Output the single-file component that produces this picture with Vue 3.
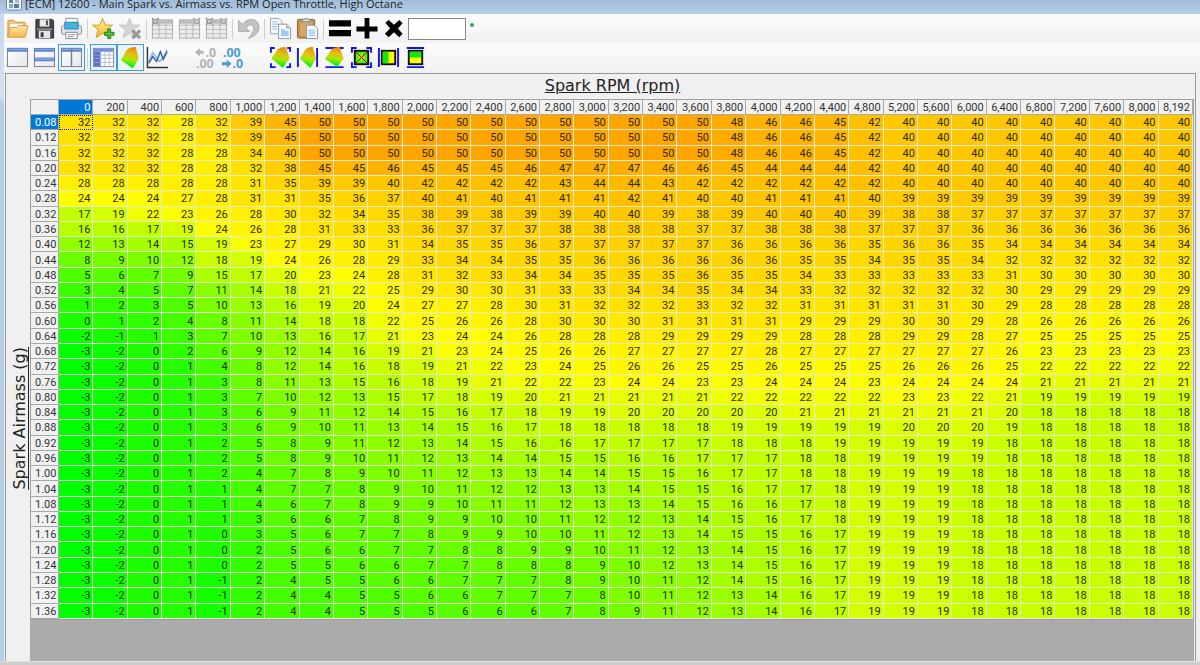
<script setup>
const rpm = [
  ...Array.from({ length: 23 }, (_, i) => i * 200),
  ...Array.from({ length: 9 }, (_, i) => 4800 + i * 400),
  8192
].map((v) => v.toLocaleString('en-US'))

const source = `
32 32 32 28 32 39 45 50 50 50 50 50 50 50 50 50 50 50 50 48 46 46 45 42 40 40 40 40 40 40 40 40 40
32 32 32 28 32 39 45 50 50 50 50 50 50 50 50 50 50 50 50 48 46 46 45 42 40 40 40 40 40 40 40 40 40
32 32 32 28 28 34 40 50 50 50 50 50 50 50 50 50 50 50 50 48 46 46 45 42 40 40 40 40 40 40 40 40 40
32 32 32 28 28 32 38 45 45 46 45 45 45 46 47 47 47 46 46 45 44 44 44 42 40 40 40 40 40 40 40 40 40
28 28 28 28 28 31 35 39 39 40 42 42 42 42 43 44 44 43 42 42 42 42 42 42 40 40 40 40 40 40 40 40 40
24 24 24 27 28 31 31 35 36 37 40 41 40 41 41 41 42 41 40 40 41 41 41 40 39 39 39 39 39 39 39 39 39
17 19 22 23 26 28 30 32 34 35 38 39 38 39 39 40 40 39 38 39 40 40 40 39 38 38 37 37 37 37 37 37 37
16 16 17 19 24 26 28 31 33 33 36 37 37 37 38 38 38 38 37 37 38 38 38 37 37 37 36 36 36 36 36 36 36
12 13 14 15 19 23 27 29 30 31 34 35 35 36 37 37 37 37 37 36 36 36 36 35 36 36 35 34 34 34 34 34 34
8 9 10 12 18 19 24 26 28 29 33 34 34 35 35 36 36 36 36 36 36 35 35 34 35 35 34 32 32 32 32 32 32
5 6 7 9 15 17 20 23 24 28 31 32 33 34 34 35 35 35 36 35 35 34 33 33 33 33 33 31 30 30 30 30 30
3 4 5 7 11 14 18 21 22 25 29 30 30 31 33 33 34 34 35 34 34 33 32 32 32 32 32 30 29 29 29 29 29
1 2 3 5 10 13 16 19 20 24 27 27 28 30 31 32 32 32 33 32 32 31 31 31 31 31 30 29 28 28 28 28 28
0 1 2 4 8 11 14 18 18 22 25 26 26 28 30 30 30 31 31 31 31 29 29 29 30 30 29 28 26 26 26 26 26
-2 -1 1 3 7 10 13 16 17 21 23 24 24 26 28 28 28 29 29 29 29 28 28 28 29 29 28 27 25 25 25 25 25
-3 -2 0 2 6 9 12 14 16 19 21 23 24 25 26 26 27 27 27 27 28 27 27 27 27 27 27 26 23 23 23 23 23
-3 -2 0 1 4 8 12 14 16 18 19 21 22 23 24 25 26 26 25 25 26 25 25 25 26 26 26 25 22 22 22 22 22
-3 -2 0 1 3 8 11 13 15 16 18 19 21 22 22 23 24 24 23 23 24 24 24 23 24 24 24 24 21 21 21 21 21
-3 -2 0 1 3 7 10 12 13 15 17 18 19 20 21 21 21 21 21 22 22 22 22 22 23 23 22 21 19 19 19 19 19
-3 -2 0 1 3 6 9 11 12 14 15 16 17 18 19 19 20 20 20 20 20 21 21 21 21 21 21 20 18 18 18 18 18
-3 -2 0 1 3 6 9 10 11 13 14 15 16 17 18 18 18 18 18 19 19 19 19 19 20 20 20 19 18 18 18 18 18
-3 -2 0 1 2 5 8 9 11 12 13 14 15 16 16 17 17 17 17 18 18 18 19 19 19 19 19 18 18 18 18 18 18
-3 -2 0 1 2 5 8 9 10 11 12 13 14 14 15 15 16 16 17 17 17 18 18 19 19 19 19 18 18 18 18 18 18
-3 -2 0 1 2 4 7 8 9 10 11 12 13 13 14 14 15 15 16 17 17 18 18 19 19 19 18 18 18 18 18 18 18
-3 -2 0 1 1 4 7 7 8 9 10 11 12 12 13 13 14 15 15 16 17 17 18 19 19 19 18 18 18 18 18 18 18
-3 -2 0 1 1 4 6 7 8 9 9 10 11 11 12 13 13 14 15 16 16 17 18 19 19 19 18 18 18 18 18 18 18
-3 -2 0 1 1 3 6 6 7 8 9 9 10 10 11 12 12 13 14 15 16 17 18 19 19 19 18 18 18 18 18 18 18
-3 -2 0 1 0 3 5 6 7 7 8 9 9 10 10 11 12 13 14 15 15 16 17 19 19 19 18 18 18 18 18 18 18
-3 -2 0 1 0 2 5 6 6 7 7 8 8 9 9 10 11 12 13 14 15 16 17 19 19 19 18 18 18 18 18 18 18
-3 -2 0 1 0 2 5 5 6 6 7 7 8 8 8 9 10 12 13 14 15 16 17 19 19 19 18 18 18 18 18 18 18
-3 -2 0 1 -1 2 4 5 5 6 6 7 7 7 8 9 10 11 12 14 15 16 17 19 19 19 18 18 18 18 18 18 18
-3 -2 0 1 -1 2 4 4 5 5 6 6 7 7 7 8 10 11 12 13 14 16 17 19 19 19 18 18 18 18 18 18 18
-3 -2 0 1 -1 2 4 4 5 5 5 6 6 6 7 8 9 11 12 13 14 16 17 19 19 19 18 18 18 18 18 18 18
`
const rows = source.trim().split('\n').map((line, i) => ({
  airmass: (0.08 + i * 0.04).toFixed(2),
  values: line.split(' ').map(Number)
}))

// Green at the lowest value, yellow half way, orange at the highest.
const LOW = -3
const HIGH = 50
const MID = (LOW + HIGH) / 2
function shade(v) {
  if (v <= MID) return `rgb(${Math.round(((v - LOW) / (MID - LOW)) * 255)}, 255, 0)`
  return `rgb(255, ${Math.round(255 - ((v - MID) / (HIGH - MID)) * 90)}, 0)`
}
</script>

<template>
  <div class="window">
    <svg width="0" height="0" class="defs" aria-hidden="true">
      <defs>
        <linearGradient id="surf" x1="0.6" y1="0" x2="0.4" y2="1">
          <stop offset="0" stop-color="#e88a10" /><stop offset="0.35" stop-color="#e0c40c" />
          <stop offset="0.6" stop-color="#a6e80a" /><stop offset="0.85" stop-color="#0cf010" />
        </linearGradient>
        <linearGradient id="gold" x1="0" y1="0" x2="0" y2="1">
          <stop offset="0" stop-color="#fff3a8" /><stop offset="1" stop-color="#f3b41c" />
        </linearGradient>
        <linearGradient id="folder" x1="0" y1="0" x2="0" y2="1">
          <stop offset="0" stop-color="#ffe9b0" /><stop offset="1" stop-color="#f8b84a" />
        </linearGradient>
        <linearGradient id="pane" x1="0" y1="0" x2="1" y2="1">
          <stop offset="0" stop-color="#ffffff" /><stop offset="1" stop-color="#e4e6ea" />
        </linearGradient>
      </defs>
    </svg>

    <header class="titlebar">
      <svg class="app-icon" viewBox="0 0 16 14">
        <rect x="0.5" y="-2" width="15" height="12" rx="1" fill="#f4f6f8" stroke="#7b8794" />
        <rect x="3" y="0" width="4" height="3" fill="#5b86b0" /><rect x="9" y="0" width="4" height="3" fill="#a9bccb" />
        <rect x="3" y="4" width="4" height="4" fill="#8fa9be" /><rect x="8" y="4" width="5" height="4" fill="#4d7da9" />
      </svg>
      <span class="title">[ECM] 12600 - Main Spark vs. Airmass vs. RPM Open Throttle, High Octane</span>
    </header>

    <div class="content">
      <div class="toolbar" role="toolbar" aria-label="File and edit">
        <button class="tool" aria-label="Open">
          <svg viewBox="0 0 24 24"><path d="M2 20V4.500q0-1 1-1h5l2 2h9q1 0 1 1V14z" fill="#f2c878" stroke="#c9923a" /><path d="M4 7h14v6H4z" fill="#fff" stroke="#cdb98f" stroke-width=".6" /><path d="M1.500 21 4.500 11H11l2-2h10l-3 12z" fill="url(#folder)" stroke="#d69a3c" stroke-linejoin="round" /></svg>
        </button>
        <button class="tool" aria-label="Save">
          <svg viewBox="0 0 24 24"><path d="M3 2.500h17l1.500 1.500v18H3z" fill="#474549" stroke="#302e32" /><path d="M7 2.500h10V10H7z" fill="#e9ebee" /><rect x="13.500" y="3.500" width="2" height="5" fill="#474549" /><path d="M4 12h16v2H4z" fill="#8e8d92" /><path d="M6 14.500h12V22H6z" fill="#e4e5e8" /><rect x="8" y="16" width="3" height="5" fill="#3b393d" /></svg>
        </button>
        <button class="tool" aria-label="Print">
          <svg viewBox="0 0 24 24"><path d="M6 1.500h12V9H6z" fill="#fff" stroke="#8b929a" /><path d="M4 9 6.500 6h11L20 9z" fill="#7d858e" /><rect x="1.500" y="9" width="21" height="9" rx="2" fill="#dfe3e8" stroke="#8a929b" /><path d="M5 5.500h14v7H5z" fill="#45b3dc" stroke="#2d86b5" /><path d="M6 16h12v6.500H6z" fill="#fff" stroke="#808992" /><path d="M8 18.500h8M8 20.500h6" stroke="#88939e" /></svg>
        </button>
        <span class="sep"></span>
        <button class="tool" aria-label="Add favorite">
          <svg viewBox="0 0 24 24"><path d="m11 1.500 2.800 7h7.700l-6 4.800 2.300 8.200L11 17l-6.800 4.500 2.300-8.200-6-4.800h7.700z" fill="url(#gold)" stroke="#d4971b" stroke-linejoin="round" /><path d="M16.500 12.500h3v3.500H23v3h-3.500v3.500h-3V19H13v-3h3.500z" fill="#4fc03a" stroke="#1f7d17" /></svg>
        </button>
        <button class="tool" aria-label="Remove favorite" disabled>
          <svg viewBox="0 0 24 24"><path d="m11 1.500 2.800 7h7.700l-6 4.800 2.300 8.200L11 17l-6.800 4.500 2.300-8.200-6-4.800h7.700z" fill="#d6d6d6" stroke="#c2c2c2" stroke-linejoin="round" /><path d="m14 14 8 8m0-8-8 8" stroke="#9b9b9b" stroke-width="3.500" /></svg>
        </button>
        <span class="sep"></span>
        <button v-for="n in 3" :key="n" class="tool" :aria-label="'Table tool ' + n" disabled>
          <svg viewBox="0 0 24 24">
            <rect x="1.500" y="3" width="21" height="19" fill="#ededed" stroke="#aaa" /><path d="M2 3h20v4H2z" fill="#bcbcbc" /><path d="M2 8.500h20M2 13h20M2 17.500h20M8.500 4v18M15.500 4v18" stroke="#bbb" />
            <path v-if="n !== 2" d="M1 1l7 7m0-7-7 7" stroke="#858585" stroke-width="1.500" stroke-dasharray="2 1" />
            <circle v-if="n !== 2" cx="4.500" cy="4.500" r="2" fill="#d8d8d8" stroke="#858585" />
            <path v-if="n !== 1" d="M16 1l7 7m0-7-7 7" stroke="#9a9a9a" stroke-width="1.500" stroke-dasharray="2 1" />
            <circle v-if="n !== 1" cx="19.500" cy="4.500" r="2" fill="#d8d8d8" stroke="#9a9a9a" />
          </svg>
        </button>
        <span class="sep"></span>
        <button class="tool" aria-label="Undo" disabled>
          <svg viewBox="0 0 24 24"><path d="M1.500 3.500V15H13L9.500 11.500Q13 6.500 16.500 9 20 13 12 22.500 24 18 23 9.500 21.500 2.500 14.500 2.500 9.500 2.500 5.500 7.500z" fill="#c3c3c3" stroke="#aaa" /></svg>
        </button>
        <span class="sep"></span>
        <button class="tool" aria-label="Copy">
          <svg viewBox="0 0 24 24"><path d="M1.500 1.500h9l3 3v13h-12z" fill="#f5f7f9" stroke="#9aa5b0" /><path d="M3.500 5h5M3.500 7.500h7M3.500 10h5M3.500 12.500h5" stroke="#8dbbe0" /><path d="M10 7.500h8.500l4 4V22.500H10z" fill="#fbfcfe" stroke="#8b97a3" /><path d="M18.500 7.500v4h4" fill="#dce4eb" stroke="#8b97a3" /><path d="M12.500 12.500h4V14h4v6h-8z" fill="#9fcdf0" /></svg>
        </button>
        <button class="tool" aria-label="Paste">
          <svg viewBox="0 0 24 24"><rect x="1.500" y="2.500" width="18" height="19.500" rx="1.500" fill="#c58e4d" stroke="#8f6230" /><path d="M4 5h13v15H4z" fill="#d6a768" /><path d="M6 5V2.500h2.500Q10.500-.5 12.500 2.500H15V5z" fill="#d5d9dd" stroke="#7f858b" /><path d="M11 8.500h8l3.500 3.500v10.500H11z" fill="#f7fafd" stroke="#8b97a3" /><path d="M13 13h7v7h-7z" fill="#a7d1f1" /><path d="M13 15.500h7M13 18h7" stroke="#f4f9fd" stroke-width=".7" /></svg>
        </button>
        <span class="sep"></span>
        <button class="tool" aria-label="Set equal">
          <svg viewBox="0 0 24 24"><path d="M1 3.500h23v6.500H1zM1 13.500h23V20H1z" fill="#000" /></svg>
        </button>
        <button class="tool" aria-label="Add value">
          <svg viewBox="0 0 24 24"><path d="M10 1h5v9h8.500v5H15v7.500h-5V15H1.500v-5H10z" fill="#000" /></svg>
        </button>
        <button class="tool" aria-label="Multiply">
          <svg viewBox="0 0 24 24"><path d="M3.500 6 7 3l5.500 5L18 3l3.500 3.500L16.500 12l5 5.500L18 21l-5.500-5L7 21l-4-3.500L8.500 12z" fill="#000" /></svg>
        </button>
        <input class="amount" type="text" aria-label="Value" />
        <span class="dot"></span>
      </div>

      <div class="toolbar" role="toolbar" aria-label="View">
        <button class="tool" aria-label="Single pane">
          <svg viewBox="0 0 24 24"><rect x="1.500" y="2.500" width="21" height="19" fill="url(#pane)" stroke="#777d87" /><path d="M1 2h22v4H1z" fill="#5b82cf" /><path d="M2 3h20v1H2z" fill="#9bb6e8" /></svg>
        </button>
        <button class="tool" aria-label="Stacked panes">
          <svg viewBox="0 0 24 24"><rect x="1.500" y="2.500" width="21" height="19" fill="url(#pane)" stroke="#777d87" /><path d="M1 2h22v4H1zM1 12h22v4H1z" fill="#5b82cf" /><path d="M2 3h20v1H2zM2 13h20v1H2z" fill="#9bb6e8" /></svg>
        </button>
        <button class="tool on" aria-label="Side by side panes" aria-pressed="true">
          <svg viewBox="0 0 24 24"><rect x="1.500" y="2.500" width="21" height="19" fill="url(#pane)" stroke="#777d87" /><path d="M1 2h22v4H1z" fill="#5b82cf" /><path d="M2 3h20v1H2z" fill="#9bb6e8" /><path d="M12 3v18" stroke="#777d87" stroke-width="1.500" /></svg>
        </button>
        <span class="sep"></span>
        <button class="tool on" aria-label="Table view" aria-pressed="true">
          <svg viewBox="0 0 24 24"><rect x="1.500" y="2.500" width="21" height="19" fill="#fff" stroke="#7f8bb8" /><path d="M2 3h20v3H2z" fill="#6f8fe0" /><path d="M2 6h7v15H2z" fill="#6070c8" /><path d="M2 9.500h20M2 13h20M2 17h20M9 6v15M13.500 6v15M18 6v15" stroke="#a3aed8" stroke-width=".8" /></svg>
        </button>
        <button class="tool on" aria-label="Surface view" aria-pressed="true">
          <svg viewBox="0 0 24 24"><path d="M2 14.500 8.500 3.500q4.500-3 9-2.500L20.500 13l-6 10.500z" fill="url(#surf)" /></svg>
        </button>
        <button class="tool" aria-label="Line chart">
          <svg viewBox="0 0 24 24"><path d="m3 16 4-9 7 9 4-4 4-8" fill="none" stroke="#8ab4dc" stroke-width="1.500" /><path d="M3 18l4-7 4 5 4-10 3 8 4-8" fill="none" stroke="#2f62a8" stroke-width="1.500" /><path d="M1.500 1v21.500H23" fill="none" stroke="#333" stroke-width="1.500" /></svg>
        </button>
        <button class="tool gap" aria-label="Increase decimals" disabled>
          <svg viewBox="0 0 24 24" class="decimals gray"><path d="m1 6.500 5-4.500v3h4v3H6v3z" /><text x="12" y="11">.0</text><text x="2" y="23">.00</text></svg>
        </button>
        <button class="tool" aria-label="Decrease decimals">
          <svg viewBox="0 0 24 24" class="decimals blue"><text x="2" y="11">.00</text><path d="M11 18.500 6 14v3H1v3h5v3z" /><text x="12" y="23">.0</text></svg>
        </button>
        <button class="tool gap" aria-label="Fit surface">
          <svg viewBox="0 0 24 24"><path d="M2.500 13 9 3.500q4-3 8.500-2.500L21.500 13l-7 10z" fill="url(#surf)" /><path d="M2 7V2h4M19 2h3v4M22 18v4h-4M7 22H2v-4" fill="none" stroke="#1414f0" stroke-width="2" /></svg>
        </button>
        <button class="tool" aria-label="Fit surface width">
          <svg viewBox="0 0 24 24"><path d="M4 13 10 3.500q4-3 7.500-2.500L21 13l-6 10z" fill="url(#surf)" /><path d="M2 2v20M22 2v20" stroke="#1414f0" stroke-width="2" /></svg>
        </button>
        <button class="tool" aria-label="Fit surface height">
          <svg viewBox="0 0 24 24"><path d="M2.500 22h19M2.500 2h19" stroke="#1414f0" stroke-width="2" /><path d="M2 13.500 9 3.500q4-3 8.500-2.500L21.500 13 15 22z" fill="url(#surf)" /></svg>
        </button>
        <button class="tool" aria-label="Fit grid">
          <svg viewBox="0 0 24 24"><path d="M2 7V2h5M17 2h5v5M22 17v5h-5M7 22H2v-5" fill="none" stroke="#1414f0" stroke-width="2" /><rect x="5" y="5" width="14" height="14" fill="#5df000" stroke="#111" stroke-width="2" /><path d="m12 8 4 4-4 4-4-4z" fill="#e8c400" /><path d="m6 6 12 12M18 6 6 18" stroke="#3a3300" stroke-width="1" /></svg>
        </button>
        <button class="tool" aria-label="Fit grid width">
          <svg viewBox="0 0 24 24"><path d="M2 2v20M22 2v20" stroke="#1414f0" stroke-width="2" /><rect x="5" y="5" width="14" height="14" fill="#ff0" stroke="#111" stroke-width="2" /><path d="M6 6h6v12H6z" fill="#10e810" /></svg>
        </button>
        <button class="tool" aria-label="Fit grid height">
          <svg viewBox="0 0 24 24"><path d="M3 2h18M3 22h18" stroke="#1414f0" stroke-width="2" /><rect x="5" y="5" width="14" height="14" fill="#ff0" stroke="#111" stroke-width="2" /><path d="M6 6h12v6H6z" fill="#10e810" /></svg>
        </button>
      </div>

      <main class="panel">
        <div class="axis-x">Spark RPM (rpm)</div>
        <div class="panel-body">
          <div class="axis-y"><span>Spark Airmass (g)</span></div>
          <div class="grid">
            <div class="grid-fill">
              <table>
                <colgroup><col class="head-col" /><col v-for="c in rpm" :key="c" /></colgroup>
                <thead>
                  <tr>
                    <td class="corner"></td>
                    <th v-for="(c, i) in rpm" :key="c" scope="col" :class="{ picked: i === 0 }">{{ c }}</th>
                  </tr>
                </thead>
                <tbody>
                  <tr v-for="(row, r) in rows" :key="row.airmass">
                    <th scope="row" :class="{ picked: r === 0 }">{{ row.airmass }}</th>
                    <td
                      v-for="(v, c) in row.values"
                      :key="c"
                      :class="{ current: r === 0 && c === 0 }"
                      :style="{ backgroundColor: shade(v) }"
                    >{{ v }}</td>
                  </tr>
                </tbody>
              </table>
            </div>
          </div>
        </div>
      </main>
    </div>
    <footer class="edge"></footer>
  </div>
</template>

<style>
body {
  background: #f0f0f0;
}
</style>

<style scoped>
.window {
  display: flex;
  flex-direction: column;
  height: 100vh;
  min-height: 620px;
  background: linear-gradient(#c6d9ee, #d3e1f1 96px, #b5cee8 104px, #b5cee8);
  color: #222;
}
.defs {
  position: absolute;
}
.titlebar {
  flex: none;
  display: flex;
  align-items: flex-end;
  gap: 3px;
  height: 14px;
  padding-left: 6px;
  overflow: hidden;
  background: linear-gradient(#9fbbd9, #b9d0e9);
}
.app-icon {
  flex: none;
  width: 16px;
  height: 14px;
}
.title {
  font: 11px/20px "Open Sans", "Noto Sans", sans-serif;
  white-space: nowrap;
  color: #1a1f26;
}
.content {
  flex: 1;
  display: flex;
  flex-direction: column;
  min-height: 0;
  margin-left: 4px;
  background: #f0f0f0;
}
.toolbar {
  flex: none;
  display: flex;
  align-items: center;
  height: 29px;
  background: linear-gradient(#fcfcfc, #f1f1f1);
}
.tool {
  flex: none;
  display: flex;
  align-items: center;
  justify-content: center;
  width: 27px;
  height: 27px;
  padding: 0;
  border: 1px solid transparent;
  background: none;
}
.tool svg {
  flex: none;
  width: 23px;
  height: 23px;
}
.tool.on {
  border-color: #3c9be4;
  background: #eef4fa;
}
.tool.gap {
  margin-left: 21px;
}
.sep {
  flex: none;
  width: 1px;
  height: 20px;
  margin: 0 2px;
  background: #cfcfcf;
}
.decimals {
  overflow: visible;
  font: bold 13px "Open Sans", sans-serif;
}
.gray {
  fill: #b3b3b3;
}
.blue {
  fill: #4b9bd0;
}
.amount {
  box-sizing: border-box;
  width: 58px;
  height: 22px;
  margin-left: 1px;
  border: 1px solid #868686;
  background: #fff;
}
.dot {
  width: 4px;
  height: 4px;
  margin: 0 0 8px 4px;
  border-radius: 50%;
  background: #3f9f55;
}
.panel {
  flex: 1;
  display: flex;
  flex-direction: column;
  min-height: 0;
  margin: 1px 4px 0 1px;
  border: solid #989898;
  border-width: 1px 1px 0;
  font-family: Roboto, "Liberation Sans", sans-serif;
}
.axis-x,
.axis-y {
  font: 16px/24px "DejaVu Sans", Verdana, sans-serif;
  text-decoration: underline;
  white-space: nowrap;
}
.axis-x {
  flex: none;
  height: 25px;
  padding-left: 24px;
  text-align: center;
}
.panel-body {
  flex: 1;
  display: flex;
  min-height: 0;
}
.axis-y {
  flex: none;
  display: flex;
  align-items: center;
  justify-content: flex-end;
  width: 24px;
  padding-top: 76px;
}
.axis-y span {
  writing-mode: vertical-rl;
  line-height: 20px;
  transform: rotate(180deg);
  text-decoration: underline;
}
.grid {
  flex: 1;
  display: flex;
  flex-direction: column;
  min-width: 0;
  padding-bottom: 41px;
  margin-right: 1px;
  background: #ababab;
}
.grid-fill {
  flex: 1;
  min-height: 0;
}
table {
  width: 100%;
  height: 100%;
  table-layout: fixed;
  border-spacing: 0;
  border: 1px solid #a0a0a0;
  font-size: 11px;
  line-height: 14px;
}
.head-col {
  width: 28px;
}
th,
td {
  padding: 1px 2px 0 0;
  border: solid #e8e8d8;
  border-width: 0 1px 1px 0;
  text-align: right;
  font-weight: normal;
  white-space: nowrap;
  line-height: 13px;
  color: #2b2b0c;
}
th,
.corner {
  border-color: #a8a8a8;
  background: #f1f1f1;
  color: #333;
}
tbody th {
  padding: 1px 0 0 4px;
  text-align: left;
}
th.picked {
  background: #0078d7;
  color: #fff;
}
.current {
  outline: 1px dotted #222;
  outline-offset: -1px;
}
.edge {
  flex: none;
  height: 4px;
  background: #cdcdcd;
  border-top: 1px solid #e0e0e0;
  box-sizing: border-box;
}
</style>
